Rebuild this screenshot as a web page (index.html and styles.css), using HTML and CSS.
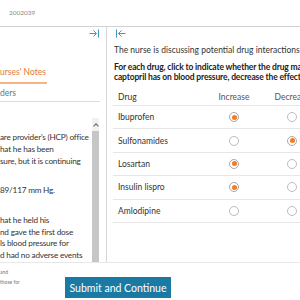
FILE: index.html
```html
<!DOCTYPE html>
<html lang="en">
<head>
    <meta charset="UTF-8">
    <meta name="viewport" content="width=device-width, initial-scale=1.0">
    <title>Case 2002039</title>
    <link rel="stylesheet" href="styles.css">
</head>
<body>
    <div class="page">
        <header class="topbar">
            <span class="case-id">2002039</span>
        </header>

        <main class="workspace">
            <section class="chart-panel">
                <div class="panel-tools right">
                    <svg class="tool-icon" width="10" height="9" viewBox="0 0 10 9">
                        <path d="M0.5 4.5H7.5M4.5 1.5L7.5 4.5L4.5 7.5M9.5 0.5V8.5" fill="none" stroke="#3a9ac4" stroke-width="1"/>
                    </svg>
                </div>
                <nav class="tabs">
                    <span class="tab active">urses' Notes</span>
                    <span class="tab">ders</span>
                </nav>
                <div class="notes">
                    <div class="notes-text">
                        <p>are provider's (HCP) office<br>hat he has been<br>sure, but it is continuing<br>&nbsp;</p>
                        <p>89/117 mm Hg.<br>&nbsp;</p>
                        <p>hat he held his<br>nd gave the first dose<br>ls blood pressure for<br>d had no adverse events</p>
                    </div>
                    <div class="scrollbar">
                        <span class="scroll-arrow"></span>
                        <span class="scroll-thumb"></span>
                    </div>
                </div>
            </section>

            <section class="question-panel">
                <div class="panel-tools left">
                    <svg class="tool-icon" width="10" height="9" viewBox="0 0 10 9">
                        <path d="M0.5 0.5V8.5M9.5 4.5H2.5M5.5 1.5L2.5 4.5L5.5 7.5" fill="none" stroke="#3a9ac4" stroke-width="1"/>
                    </svg>
                </div>
                <p class="stem">The nurse is discussing potential drug interactions with the client.</p>
                <p class="instruction">For each drug, click to indicate whether the drug may increase the effect that<br>captopril has on blood pressure, decrease the effect, or have no effect.</p>

                <div class="matrix">
                    <div class="matrix-row head">
                        <span class="drug">Drug</span>
                        <span class="opt">Increase</span>
                        <span class="opt">Decrease</span>
                        <span class="opt">No Effect</span>
                    </div>
                    <div class="matrix-row">
                        <span class="drug">Ibuprofen</span>
                        <span class="opt"><i class="radio checked"></i></span>
                        <span class="opt"><i class="radio"></i></span>
                        <span class="opt"><i class="radio"></i></span>
                    </div>
                    <div class="matrix-row">
                        <span class="drug">Sulfonamides</span>
                        <span class="opt"><i class="radio"></i></span>
                        <span class="opt"><i class="radio checked"></i></span>
                        <span class="opt"><i class="radio"></i></span>
                    </div>
                    <div class="matrix-row">
                        <span class="drug">Losartan</span>
                        <span class="opt"><i class="radio checked"></i></span>
                        <span class="opt"><i class="radio"></i></span>
                        <span class="opt"><i class="radio"></i></span>
                    </div>
                    <div class="matrix-row">
                        <span class="drug">Insulin lispro</span>
                        <span class="opt"><i class="radio checked"></i></span>
                        <span class="opt"><i class="radio"></i></span>
                        <span class="opt"><i class="radio"></i></span>
                    </div>
                    <div class="matrix-row">
                        <span class="drug">Amlodipine</span>
                        <span class="opt"><i class="radio"></i></span>
                        <span class="opt"><i class="radio"></i></span>
                        <span class="opt"><i class="radio checked"></i></span>
                    </div>
                </div>
            </section>
        </main>

        <footer class="footer">
            <div class="legal">and<br>those for</div>
            <button class="submit-btn">Submit and Continue</button>
        </footer>
    </div>
</body>
</html>
```

FILE: styles.css
```css
* {
    box-sizing: border-box;
}

body {
    margin: 0;
    padding: 0;
    background: #fff;
    color: #333;
    font-family: Lato, "Open Sans", sans-serif;
    overflow: hidden;
}

.page {
    width: 300px;
    height: 300px;
    display: flex;
    flex-direction: column;
}

.topbar {
    height: 27px;
    flex-shrink: 0;
    border-bottom: 1px solid #d2d2d2;
    padding: 9px 0 0 9px;
    font-size: 6.5px;
    line-height: 8px;
    color: #8a8a8a;
}

.workspace {
    height: 235px;
    flex-shrink: 0;
    display: flex;
}

/* left chart panel */
.chart-panel {
    width: 107px;
    flex-shrink: 0;
    border-right: 1px solid #d6d6d6;
    display: flex;
    flex-direction: column;
    overflow: hidden;
}

.panel-tools {
    height: 11px;
    flex-shrink: 0;
    display: flex;
    align-items: flex-end;
}

.panel-tools.right {
    justify-content: flex-end;
    padding-right: 7px;
}

.panel-tools.left {
    padding-left: 2px;
}

.tool-icon {
    display: block;
}

.tabs {
    margin-top: 25px;
    margin-right: 6px;
    border-bottom: 1px solid #dcdcdc;
    display: flex;
    flex-direction: column;
    font-size: 8.5px;
}

.tab {
    white-space: nowrap;
}

.tab.active {
    width: 47px;
    height: 21px;
    line-height: 19px;
    color: #e8792f;
    border-bottom: 2px solid #f5b482;
}

.tab:not(.active) {
    height: 17px;
    padding-top: 2px;
    line-height: 15px;
    color: #4b8099;
}

.notes {
    margin-top: 16px;
    flex: 1;
    display: flex;
    min-height: 0;
}

.notes-text {
    width: 92px;
    padding-top: 14px;
    font-size: 8.2px;
    line-height: 11.8px;
    letter-spacing: -0.2px;
    white-space: nowrap;
    overflow: hidden;
}

.notes-text p {
    margin: 0 0 6px;
}

.scrollbar {
    width: 7px;
    margin-right: 7px;
    background: #f1f1f1;
    display: flex;
    flex-direction: column;
}

.scroll-arrow {
    height: 13px;
    flex-shrink: 0;
    display: flex;
    justify-content: center;
    align-items: center;
}

.scroll-arrow::before {
    content: "";
    width: 3px;
    height: 3px;
    margin-top: 2px;
    border-top: 1px solid #666;
    border-left: 1px solid #666;
    transform: rotate(45deg);
}

.scroll-thumb {
    flex: 1;
    background: #c6c6c6;
}

/* right question panel */
.question-panel {
    flex: 1;
    min-width: 0;
    overflow: hidden;
    padding-left: 7px;
}

.stem,
.instruction {
    margin: 0;
    font-size: 8.5px;
    line-height: 10px;
    white-space: nowrap;
}

.stem {
    margin-top: 7px;
}

.instruction {
    margin-top: 7px;
    font-weight: 700;
    letter-spacing: -0.15px;
    color: #222;
}

.matrix {
    margin-top: 6px;
    margin-left: -1px;
    width: 290px;
    font-size: 8.5px;
}

.matrix-row {
    display: grid;
    grid-template-columns: 92px 58px 58px 82px;
    align-items: center;
    height: 23.4px;
    border-bottom: 1px solid #e6e6e6;
}

.matrix-row.head {
    height: 18px;
}

.drug {
    padding-left: 5px;
    white-space: nowrap;
}

.opt {
    display: flex;
    justify-content: center;
    white-space: nowrap;
    color: #555;
}

.radio {
    width: 10px;
    height: 10px;
    border: 1px solid #bdbdbd;
    border-radius: 50%;
    background: #fff;
    display: flex;
    justify-content: center;
    align-items: center;
}

.radio.checked {
    border-color: #a8a8a8;
}

.radio.checked::after {
    content: "";
    width: 5px;
    height: 5px;
    border-radius: 50%;
    background: #f47b20;
}

/* footer */
.footer {
    flex: 1;
    border-top: 1px solid #e8e8e8;
    display: flex;
    align-items: flex-start;
}

.legal {
    width: 65px;
    padding-top: 4px;
    font-size: 5px;
    line-height: 10px;
    color: #777;
}

.submit-btn {
    margin-top: 14px;
    width: 106px;
    height: 21px;
    border: none;
    padding: 0;
    background: #1b7aa4;
    color: #fff;
    font-family: Lato, "Open Sans", sans-serif;
    font-size: 10.5px;
}
```
